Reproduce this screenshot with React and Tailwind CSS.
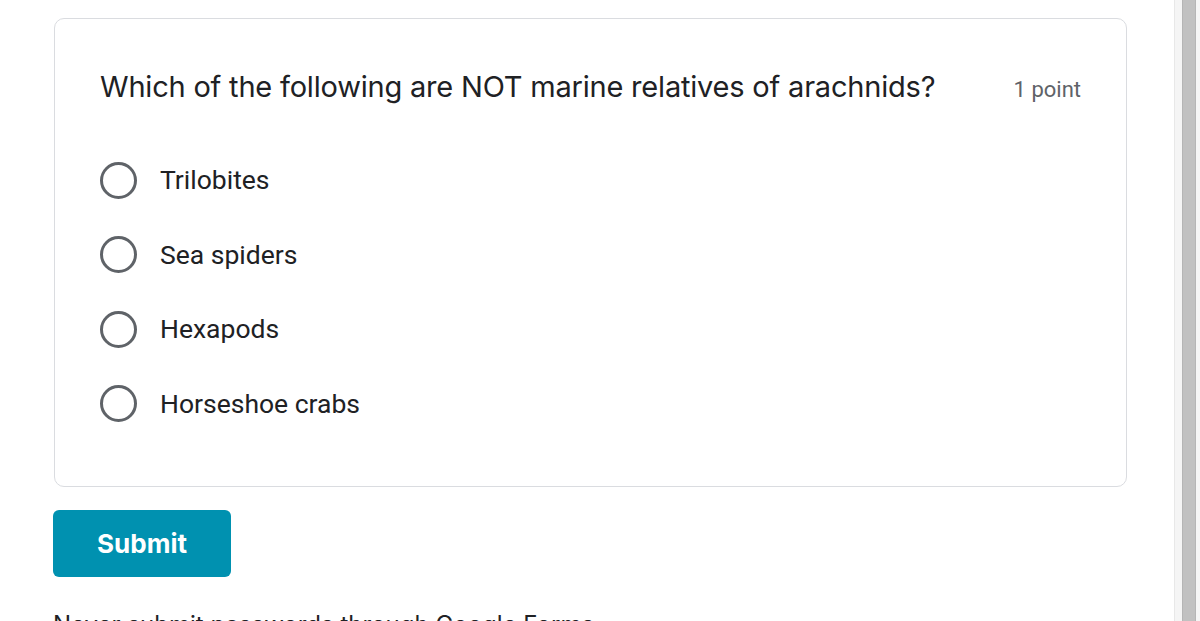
import React from 'react';

const options = ['Trilobites', 'Sea spiders', 'Hexapods', 'Horseshoe crabs'];

function Radio() {
  return <div className="w-[37px] h-[37px] shrink-0 rounded-full border-[3px] border-[#5f6368]" />;
}

export default function App() {
  return (
    <div className="flex h-[621px] w-[1200px] overflow-hidden bg-white">
      <div className="flex-1 pl-[54px] pt-[18px]">
        <div className="w-[1073px] h-[469px] rounded-[10px] border border-[#dadce0] bg-white px-[45px] pt-[48px]">
          <div className="flex items-start justify-between">
            <h2 className="text-[29px] leading-[40px] text-[#202124] tracking-[-0.2px]" style={{ fontFamily: 'Inter, sans-serif' }}>
              Which of the following are NOT marine relatives of arachnids?
            </h2>
            <span className="pt-[3px] text-[22px] leading-[40px] text-[#5f6368]" style={{ fontFamily: 'Roboto, sans-serif' }}>
              1 point
            </span>
          </div>
          <div className="mt-[33px] flex flex-col">
            {options.map(o => (
              <label key={o} className="flex h-[74.5px] items-center gap-[23px]">
                <Radio />
                <span className="text-[26.5px] text-[#202124]" style={{ fontFamily: 'Roboto, sans-serif' }}>{o}</span>
              </label>
            ))}
          </div>
        </div>
        <button className="mt-[23px] -ml-px h-[67px] w-[178px] rounded-[6px] bg-[#0091b0] text-[26px] font-bold text-white" style={{ fontFamily: 'Inter, sans-serif' }}>
          Submit
        </button>
        <p className="mt-[32px] -ml-px text-[24px] leading-[32px] text-[#202124]" style={{ fontFamily: 'Inter, sans-serif' }}>
          Never submit passwords through Google Forms.
        </p>
      </div>
      <div className="flex w-[26px] border-l border-[#e8e8e8] bg-[#f5f5f5] pl-[7px] pr-[4px]">
        <div className="flex-1 border-x border-[#b5b5b5] bg-[#c1c1c1]" />
      </div>
    </div>
  );
}
